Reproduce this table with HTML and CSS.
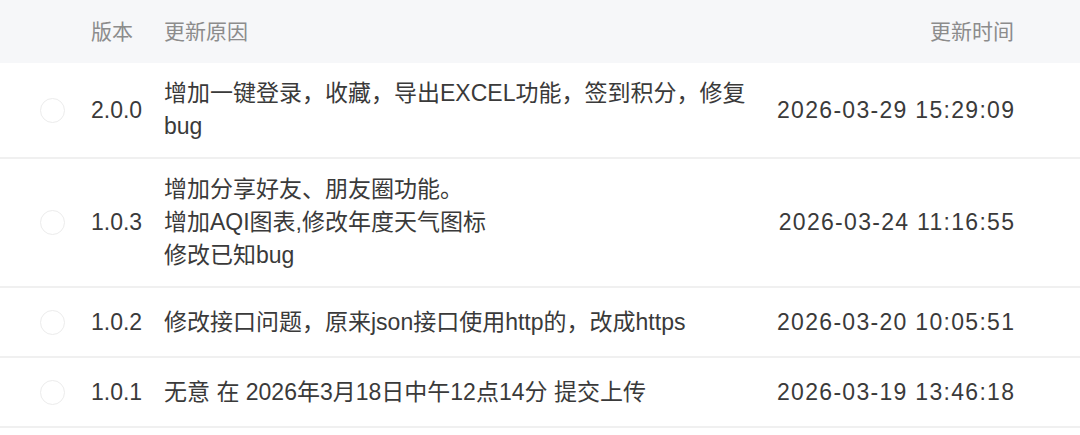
FILE: index.html
```html
<!DOCTYPE html>
<html lang="zh-CN">
<head>
<meta charset="utf-8">
<link rel="stylesheet" href="styles.css">
<title>版本记录</title>
</head>
<body>
<div class="table">
  <div class="row head">
    <span class="check-space"></span>
    <span class="ver">版本</span>
    <span class="reason">更新原因</span>
    <span class="time">更新时间</span>
  </div>
  <div class="row">
    <span class="radio"></span>
    <span class="ver">2.0.0</span>
    <span class="reason">增加一键登录，收藏，导出EXCEL功能，签到积分，修复bug</span>
    <span class="time">2026-03-29 15:29:09</span>
  </div>
  <div class="row">
    <span class="radio"></span>
    <span class="ver">1.0.3</span>
    <span class="reason">增加分享好友、朋友圈功能。<br>增加AQI图表,修改年度天气图标<br>修改已知bug</span>
    <span class="time">2026-03-24 11:16:55</span>
  </div>
  <div class="row">
    <span class="radio"></span>
    <span class="ver">1.0.2</span>
    <span class="reason">修改接口问题，原来json接口使用http的，改成https</span>
    <span class="time">2026-03-20 10:05:51</span>
  </div>
  <div class="row">
    <span class="radio"></span>
    <span class="ver">1.0.1</span>
    <span class="reason">无意 在 2026年3月18日中午12点14分 提交上传</span>
    <span class="time">2026-03-19 13:46:18</span>
  </div>
</div>
</body>
</html>
```

FILE: styles.css
```css
html, body {
  margin: 0;
  padding: 0;
  background: #ffffff;
}

body {
  font-family: "Liberation Sans", "Noto Sans CJK SC", sans-serif;
  color: #3a3a3a;
}

.table {
  width: 1080px;
}

.row {
  display: flex;
  align-items: center;
  box-sizing: border-box;
  min-height: 70px;
  padding: 14px 66px 14px 40px;
  border-bottom: 2px solid #f0f0f0;
  font-size: 23px;
  line-height: 33px;
}

.row.head {
  height: 63px;
  min-height: 0;
  padding-top: 0;
  padding-bottom: 0;
  background: #f6f7f9;
  border-bottom: none;
  color: #8c8c8c;
  font-size: 21px;
}

.radio,
.check-space {
  flex: 0 0 25px;
  width: 25px;
  height: 25px;
  box-sizing: border-box;
  margin-right: 26px;
}

.radio {
  border: 1px solid #ececec;
  border-radius: 50%;
  background: #fff;
}

.ver {
  flex: 0 0 73px;
}

.reason {
  flex: 0 0 590px;
}

.time {
  flex: 1 1 auto;
  text-align: right;
  letter-spacing: 1.3px;
  margin-right: -1.3px;
  white-space: nowrap;
}

.head .time {
  letter-spacing: 0;
  margin-right: 0;
}
```
